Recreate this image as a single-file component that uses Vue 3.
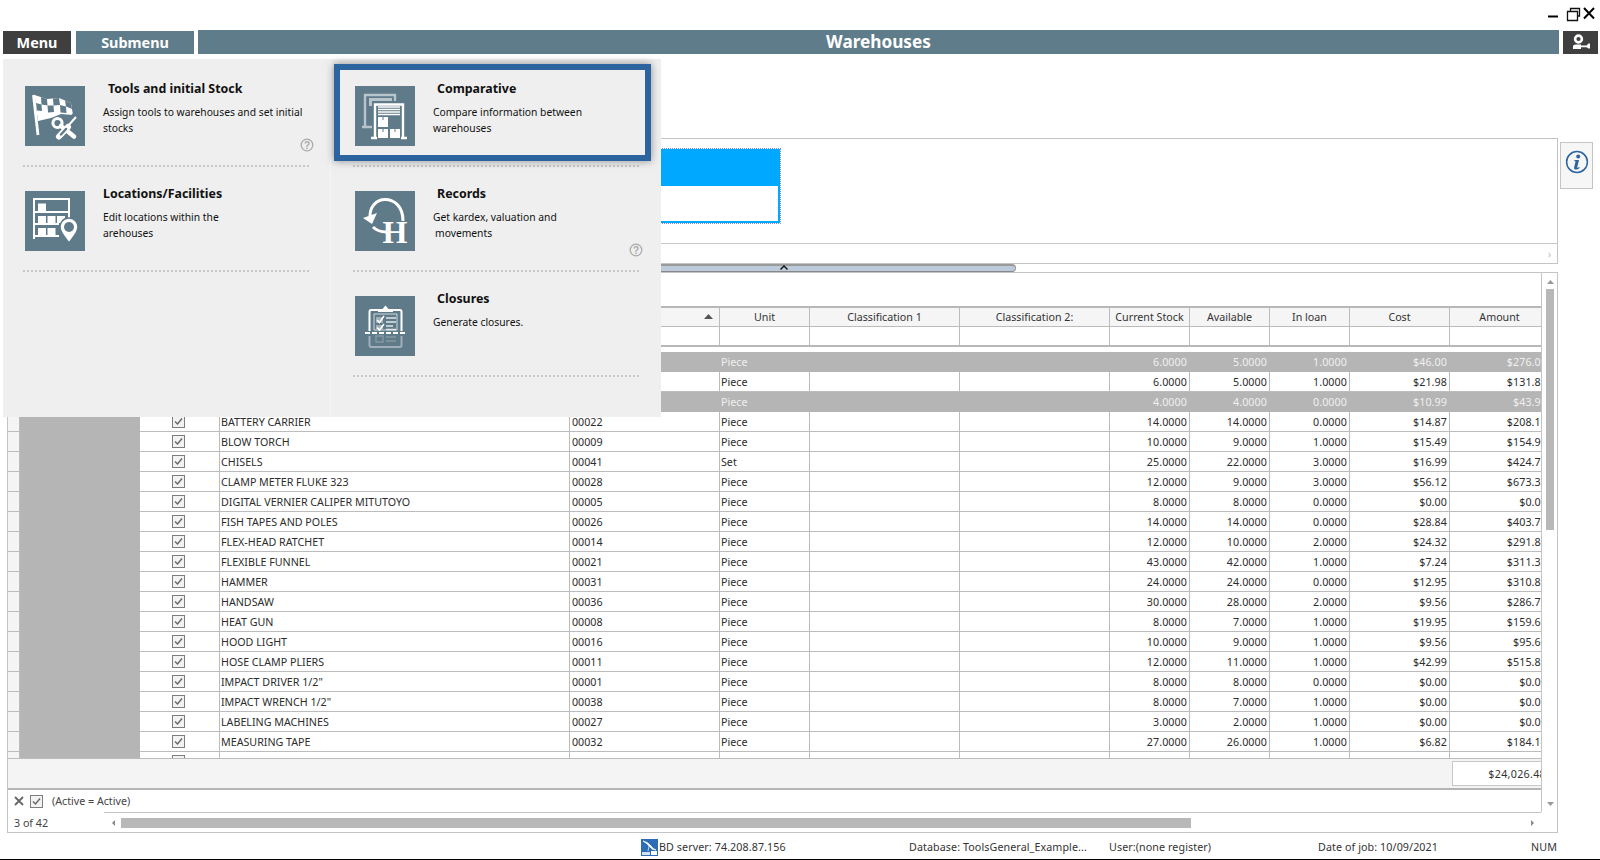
<script setup>
const rows = [
  { g: 1, n: '', c: '', u: 'Piece', v: ['6.0000', '5.0000', '1.0000', '$46.00', '$276.00'] },
  { n: '', c: '', u: 'Piece', v: ['6.0000', '5.0000', '1.0000', '$21.98', '$131.88'] },
  { g: 1, n: '', c: '', u: 'Piece', v: ['4.0000', '4.0000', '0.0000', '$10.99', '$43.96'] },
  { n: 'BATTERY CARRIER', c: '00022', u: 'Piece', v: ['14.0000', '14.0000', '0.0000', '$14.87', '$208.18'] },
  { n: 'BLOW TORCH', c: '00009', u: 'Piece', v: ['10.0000', '9.0000', '1.0000', '$15.49', '$154.90'] },
  { n: 'CHISELS', c: '00041', u: 'Set', v: ['25.0000', '22.0000', '3.0000', '$16.99', '$424.75'] },
  { n: 'CLAMP METER FLUKE 323', c: '00028', u: 'Piece', v: ['12.0000', '9.0000', '3.0000', '$56.12', '$673.38'] },
  { n: 'DIGITAL VERNIER CALIPER MITUTOYO', c: '00005', u: 'Piece', v: ['8.0000', '8.0000', '0.0000', '$0.00', '$0.00'] },
  { n: 'FISH TAPES AND POLES', c: '00026', u: 'Piece', v: ['14.0000', '14.0000', '0.0000', '$28.84', '$403.76'] },
  { n: 'FLEX-HEAD RATCHET', c: '00014', u: 'Piece', v: ['12.0000', '10.0000', '2.0000', '$24.32', '$291.84'] },
  { n: 'FLEXIBLE FUNNEL', c: '00021', u: 'Piece', v: ['43.0000', '42.0000', '1.0000', '$7.24', '$311.32'] },
  { n: 'HAMMER', c: '00031', u: 'Piece', v: ['24.0000', '24.0000', '0.0000', '$12.95', '$310.80'] },
  { n: 'HANDSAW', c: '00036', u: 'Piece', v: ['30.0000', '28.0000', '2.0000', '$9.56', '$286.78'] },
  { n: 'HEAT GUN', c: '00008', u: 'Piece', v: ['8.0000', '7.0000', '1.0000', '$19.95', '$159.60'] },
  { n: 'HOOD LIGHT', c: '00016', u: 'Piece', v: ['10.0000', '9.0000', '1.0000', '$9.56', '$95.60'] },
  { n: 'HOSE CLAMP PLIERS', c: '00011', u: 'Piece', v: ['12.0000', '11.0000', '1.0000', '$42.99', '$515.88'] },
  { n: 'IMPACT DRIVER 1/2"', c: '00001', u: 'Piece', v: ['8.0000', '8.0000', '0.0000', '$0.00', '$0.00'] },
  { n: 'IMPACT WRENCH 1/2"', c: '00038', u: 'Piece', v: ['8.0000', '7.0000', '1.0000', '$0.00', '$0.00'] },
  { n: 'LABELING MACHINES', c: '00027', u: 'Piece', v: ['3.0000', '2.0000', '1.0000', '$0.00', '$0.00'] },
  { n: 'MEASURING TAPE', c: '00032', u: 'Piece', v: ['27.0000', '26.0000', '1.0000', '$6.82', '$184.14'] },
  { n: 'MULTIMETER', c: '00018', u: 'Piece', v: ['9.0000', '8.0000', '1.0000', '$1.25', '$11.25'] }
]
const widths = [12, 120, 80, 350, 150, 90, 150, 150, 80, 80, 80, 100, 100]
const heads = ['Unit', 'Classification 1', 'Classification 2:', 'Current Stock', 'Available', 'In loan', 'Cost', 'Amount']
</script>

<template>
  <div class="page">
    <div class="winbar">
      <svg class="winctl" width="50" height="16" viewBox="0 0 50 16">
        <path d="M2 10.5H12" stroke="#000" stroke-width="2" />
        <path d="M21.5 5.5H31.5V14.5H21.5Z M24.5 5V2.5H33.5V10H32" fill="none" stroke="#111" stroke-width="1.3" />
        <path d="M38 2L48 12.5M48 2L38 12.5" stroke="#000" stroke-width="2" />
      </svg>
    </div>

    <div class="nav">
      <div class="navbtn dark menu"><span>Menu</span></div>
      <div class="navbtn submenu"><span>Submenu</span></div>
      <div class="navtitle"><span>Warehouses</span></div>
      <div class="navbtn dark user">
        <svg width="20" height="16" viewBox="0 0 20 16">
          <circle cx="7.5" cy="5" r="3.4" fill="none" stroke="#fff" stroke-width="2.6" />
          <path d="M2 15V12.5Q2 10.5 5 10.5H10V15Z" fill="#fff" />
          <path d="M10 11.5H15.5L17.5 9.5H19V14.5H17.5L15.5 13.2H10Z" fill="#fff" />
        </svg>
      </div>
    </div>

    <div class="content">
      <div class="main">
        <div class="upper">
          <div class="chartzone">
            <div class="chartbox">
              <div class="chartfill"></div>
            </div>
          </div>
          <div class="uppermeta"><span class="tinyarrow">›</span></div>
        </div>

        <div class="splitter"><svg width="8" height="5" viewBox="0 0 8 5"><path d="M.5 4.5L4 1L7.5 4.5" fill="none" stroke="#111" stroke-width="1.4" /></svg></div>

        <div class="frame">
          <div class="framemain">
            <div class="gridcol">
              <div class="tableclip">
                <div class="groupband"></div>
                <table class="grid">
                  <colgroup>
                    <col v-for="(w, i) in widths" :key="i" :style="{ width: w + 'px' }" />
                  </colgroup>
                  <thead>
                    <tr class="headrow">
                      <th class="rh"></th>
                      <th></th>
                      <th></th>
                      <th></th>
                      <th class="sorted"><svg width="9" height="5" viewBox="0 0 9 5"><path d="M4.5 0L9 5H0Z" fill="#555" /></svg></th>
                      <th v-for="h in heads" :key="h">{{ h }}</th>
                    </tr>
                    <tr class="filterrow">
                      <td class="rh"></td>
                      <td v-for="i in 12" :key="i"></td>
                    </tr>
                    <tr class="gaprow"><td colspan="13"></td></tr>
                  </thead>
                  <tbody>
                    <tr v-for="(r, i) in rows" :key="i" :class="['datarow', { greyrow: r.g }]">
                      <td class="rh"></td>
                      <td class="greycol"></td>
                      <td class="checkcell"><span class="check"><svg width="11" height="11" viewBox="0 0 11 11"><path d="M2 5.5L4.5 8L9 2.5" fill="none" stroke="#666" stroke-width="1.4" /></svg></span></td>
                      <td class="txt">{{ r.n }}</td>
                      <td class="txt code">{{ r.c }}</td>
                      <td class="txt">{{ r.u }}</td>
                      <td></td>
                      <td></td>
                      <td v-for="(x, k) in r.v" :key="k" class="num">{{ x }}</td>
                    </tr>
                  </tbody>
                </table>
              </div>
              <div class="totals"><div class="totalcell">$24,026.48</div></div>
              <div class="filterbar">
                <svg width="10" height="10" viewBox="0 0 10 10"><path d="M1 1L9 9M9 1L1 9" stroke="#666" stroke-width="1.8" /></svg>
                <span class="check"><svg width="11" height="11" viewBox="0 0 11 11"><path d="M2 5.5L4.5 8L9 2.5" fill="none" stroke="#666" stroke-width="1.4" /></svg></span>
                <span class="filtertxt">(Active = Active)</span>
              </div>
            </div>
            <div class="vscroll">
              <svg width="7" height="4" viewBox="0 0 7 4"><path d="M3.5 0L7 4H0Z" fill="#999" /></svg>
              <div class="vthumb"></div>
              <div class="vspace"></div>
              <svg width="7" height="4" viewBox="0 0 7 4"><path d="M3.5 4L7 0H0Z" fill="#999" /></svg>
            </div>
          </div>
          <div class="framebottom">
            <span class="count">3 of 42</span>
            <div class="hscroll">
              <svg width="3" height="6" viewBox="0 0 3 6"><path d="M0 3L3 0V6Z" fill="#888" /></svg>
              <div class="hthumb"></div>
              <div class="hspace"></div>
              <svg width="3" height="6" viewBox="0 0 3 6"><path d="M3 3L0 0V6Z" fill="#888" /></svg>
            </div>
          </div>
        </div>
      </div>

      <div class="infobtn">
        <svg width="24" height="24" viewBox="0 0 24 24">
          <circle cx="12" cy="12" r="10.4" fill="none" stroke="#2c64a0" stroke-width="1.5" />
          <circle cx="13.2" cy="6.5" r="2" fill="#2c64a0" />
          <path d="M9.5 10H14L12.2 17.2Q12 18.4 14.4 17L14.7 18Q12.2 20 10 19.5Q8.6 19 9.2 17L10.6 11.6L9.3 11.1Z" fill="#2c64a0" />
        </svg>
      </div>
    </div>

    <div class="status">
      <span class="st st1">
        <svg width="17" height="17" viewBox="0 0 17 17">
          <rect width="17" height="17" fill="#2d6db5" />
          <path d="M2 2Q7 3 10 7Q12 10 15 11Q11 11 9 8Q7 5 2 2Z M8 7L7 12" fill="#fff" stroke="#fff" stroke-width=".7" />
          <rect x="1" y="13" width="8" height="3" fill="#cfe0f2" />
          <rect x="10" y="12" width="6" height="4" fill="#fff" />
        </svg>
        <span>BD server: 74.208.87.156</span>
      </span>
      <span class="st st2">Database: ToolsGeneral_Example...</span>
      <span class="st st3">User:(none register)</span>
      <span class="st st4">Date of job: 10/09/2021</span>
      <span class="st st5">NUM</span>
    </div>

    <div class="menupanel">
      <div class="menucol">
        <div class="card">
          <div class="icon">
            <svg viewBox="0 0 60 60" width="60" height="60">
              <path d="M8.5 9L13 49" stroke="#fff" stroke-width="2.8" />
              <path d="M9.5 9L22 13L34 12L46 17L48 29L36 28L26 32L13 35Z" fill="#fff" />
              <path d="M16 11L22 13L22.5 19.5L16.5 18.5Z M28 12.5L34 12L35 19L28.5 19.5Z M40 14.5L46 17L47 23L41 20.5Z M11 17L16.5 18.5L17 25L12 24.5Z M22.5 19.5L28.5 19.5L29 26L23 26.5Z M35 19L41 20.5L41.5 27L35.5 26.5Z" fill="#5f7a89" />
              <path d="M51 30L33 50M31 34L50 50" stroke="#5f7a89" stroke-width="8" />
              <path d="M36 40L49 50.5" stroke="#fff" stroke-width="4.5" stroke-linecap="round" />
              <circle cx="32.5" cy="37" r="4.6" fill="none" stroke="#fff" stroke-width="3" />
              <path d="M51 31L42 41" stroke="#fff" stroke-width="2" />
              <path d="M43 41L34 50.5" stroke="#fff" stroke-width="6" stroke-linecap="round" />
              <path d="M41 43L36 48.5" stroke="#5f7a89" stroke-width="2.4" stroke-linecap="round" />
            </svg>
          </div>
          <div class="body">
            <div class="title ind5">Tools and initial Stock</div>
            <div class="desc">Assign tools to warehouses and set initial<br />stocks</div>
          </div>
          <svg class="help helpl" width="14" height="14" viewBox="0 0 14 14">
            <circle cx="7" cy="7" r="5.8" fill="none" stroke="#aaa" stroke-width="1.3" />
            <text x="7" y="10.5" class="helpq">?</text>
          </svg>
        </div>
        <div class="card">
          <div class="icon">
            <svg viewBox="0 0 60 60" width="60" height="60">
              <path d="M9 48V8H44V30M8 21H44M8 33H34M8 45H34" fill="none" stroke="#fff" stroke-width="2" />
              <path d="M13 12.5H21V20H13Z M13 25H21V32H13Z M22.5 25H30.5V32H22.5Z M32 25H40V32H32Z M13 37H21V44H13Z M22.5 37H30.5V44H22.5Z" fill="#fff" />
              <path d="M44 27C38 27 35 32 35 36C35 42 41 47 44 52C47 47 53 42 53 36C53 32 50 27 44 27Z" fill="#fff" stroke="#5f7a89" stroke-width="1.5" />
              <circle cx="44" cy="36" r="5" fill="#5f7a89" />
            </svg>
          </div>
          <div class="body">
            <div class="title">Locations/Facilities</div>
            <div class="desc">Edit locations within the<br />arehouses</div>
          </div>
        </div>
      </div>
      <div class="menucol right">
        <div class="card active">
          <div class="hl"></div>
          <div class="icon">
            <svg viewBox="0 0 60 60" width="60" height="60">
              <path d="M10 41V9H40V16M7 41H17" fill="none" stroke="#b9c5cc" stroke-width="2.4" />
              <path d="M14 12H37V16H18V20H14Z" fill="#b9c5cc" />
              <path d="M20 52V18H48V52" fill="none" stroke="#5f7a89" stroke-width="6" />
              <path d="M20 52V18.5H48V52M16 52H22M46 52H52" fill="none" stroke="#fff" stroke-width="2.4" />
              <path d="M23 21H45M23 23.5H45M23 26H45M23 28.5H45" stroke="#fff" stroke-width="1.3" />
              <path d="M23 31H33V41H23Z M23 43H33V52H23Z M35 43H45V52H35Z" fill="#fff" />
              <path d="M27.5 31H28.5V34H27.5Z M27.5 43H28.5V46H27.5Z M39.5 43H40.5V46H39.5Z" fill="#5f7a89" />
            </svg>
          </div>
          <div class="body">
            <div class="title ind4">Comparative</div>
            <div class="desc">Compare information between<br />warehouses</div>
          </div>
        </div>
        <div class="card">
          <div class="icon">
            <svg viewBox="0 0 60 60" width="60" height="60">
              <path d="M15 25C15 15 22 8.5 30 8.5C39 8.5 48 15 48 30" fill="none" stroke="#fff" stroke-width="3" />
              <path d="M8 27L22 22L17 33Z" fill="#fff" />
              <path d="M18 36Q23 41 31 41" fill="none" stroke="#fff" stroke-width="3" />
              <text x="27.5" y="52" class="serifh">H</text>
            </svg>
          </div>
          <div class="body">
            <div class="title ind4">Records</div>
            <div class="desc">Get kardex, valuation and<br /><span class="nudge">movements</span></div>
          </div>
          <svg class="help helpr" width="14" height="14" viewBox="0 0 14 14">
            <circle cx="7" cy="7" r="5.8" fill="none" stroke="#aaa" stroke-width="1.3" />
            <text x="7" y="10.5" class="helpq">?</text>
          </svg>
        </div>
        <div class="card">
          <div class="icon">
            <svg viewBox="0 0 60 60" width="60" height="60">
              <path d="M23 14H16Q14.5 14 14.5 16V35M46.5 35V16Q46.5 14 45 14H38" fill="none" stroke="#fff" stroke-width="2" />
              <path d="M23 16V13H27.5L30.5 9.5L33.5 13H38V16Z" fill="#fff" />
              <path d="M19 18H42V34H19Z" fill="none" stroke="#fff" stroke-width="1" opacity=".7" />
              <rect x="21" y="21" width="7" height="6" fill="#9fb0ba" />
              <rect x="21" y="29" width="7" height="5" fill="#9fb0ba" />
              <path d="M22 24L24.5 26.5L29 20M22 31.5L24.5 34L29 28" fill="none" stroke="#fff" stroke-width="1.5" />
              <path d="M31 22H41M31 26H41M31 30H38M31 33.5H41" stroke="#dfe5e9" stroke-width="1.6" />
              <path d="M10 37H50" stroke="#fff" stroke-width="2" stroke-dasharray="5 2" />
              <path d="M14.5 40V49Q14.5 51 16 51H45Q46.5 51 46.5 49V40" fill="none" stroke="#9fb0ba" stroke-width="2" />
              <path d="M21 40H28V46H21Z M31 41H41M31 45H41" fill="none" stroke="#86999f" stroke-width="1.4" />
            </svg>
          </div>
          <div class="body">
            <div class="title ind4">Closures</div>
            <div class="desc">Generate closures.</div>
          </div>
        </div>
      </div>
    </div>
  </div>
</template>

<style>
html, body { margin: 0; padding: 0; background: #fff; }
</style>

<style scoped>
.page {
  position: relative;
  width: 1600px;
  height: 860px;
  overflow: hidden;
  background: #fff;
  border-bottom: 1px solid #000;
  box-sizing: border-box;
  display: flex;
  flex-direction: column;
  font-family: "Noto Sans", "DejaVu Sans", sans-serif;
  font-size: 10.7px;
  color: #333;
}
.winbar { height: 30px; display: flex; justify-content: flex-end; padding: 6px 4px 0 0; box-sizing: border-box; }
.winctl { display: block; }
.nav { height: 24px; display: flex; padding: 0 2px 0 3px; color: #fff; font-weight: 700; font-size: 14.4px; }
.navbtn, .navtitle { display: flex; align-items: center; justify-content: center; background: #5f7c8a; padding-bottom: 1px; box-sizing: border-box; }
.navbtn { margin-top: 1px; }
.dark { background: #3f3f3f; }
.menu { width: 68px; margin-right: 5px; }
.submenu { width: 118px; margin-right: 4px; }
.navtitle { flex: 1; font-size: 17.2px; margin-right: 4px; padding-bottom: 2px; }
.user { width: 35px; }

.content { flex: none; display: flex; padding: 84px 0 0 7px; height: 779px; box-sizing: border-box; }
.main { width: 1551px; display: flex; flex-direction: column; }
.infobtn {
  width: 33px; height: 47px; margin: 4px 0 0 2px; box-sizing: border-box;
  border: 1px solid #c4c4c4; background: #f6f6f6;
  display: flex; align-items: center; justify-content: center; padding: 0 0 7px 1px;
}
.upper {
  height: 126px; box-sizing: border-box; border: 1px solid #c4c4c4;
  display: flex; flex-direction: column;
}
.chartzone { height: 105px; padding: 10px 0 0 300px; box-sizing: border-box; border-bottom: 1px solid #c8c8c8; }
.chartbox { width: 472px; height: 74px; box-sizing: border-box; background: #fff; border: 2px solid #00a8ff; outline: 1px dotted #7a8fd8; }
.chartfill { height: 35px; background: #00a8ff; }
.uppermeta { flex: 1; display: flex; justify-content: flex-end; align-items: center; padding-right: 6px; color: #bbb; font-size: 10px; }
.splitter {
  height: 8px; width: 1009px; box-sizing: border-box; margin-top: 0;
  background: #bccbdc; border-top: 2px solid #9a9a9a; border-bottom: 1px solid #888;
  border-right: 1px solid #999; border-radius: 0 4px 4px 0;
  display: flex; justify-content: flex-end; align-items: flex-start; padding-right: 227px;
}
.splitter svg { margin-top: -1px; }

.frame { height: 561px; box-sizing: border-box; border: 1px solid #c4c4c4; border-top-width: 1px; display: flex; flex-direction: column; }
.framemain { height: 540px; display: flex; }
.gridcol { width: 1533px; display: flex; flex-direction: column; border-right: 1px solid #c4c4c4; box-sizing: content-box; }
.tableclip { height: 485px; overflow: hidden; flex: none; }
.groupband { height: 33px; }
.grid { border-collapse: separate; border-spacing: 0; table-layout: fixed; width: 1542px; }
.grid td, .grid th { padding: 0; box-sizing: border-box; border-right: 1px solid #bcbcbc; border-bottom: 1px solid #bcbcbc; overflow: hidden; white-space: nowrap; }
.headrow th { height: 21px; background: #f5f5f5; font-weight: 400; font-size: 10.7px; color: #333; border-top: 2px solid #b8b8b8; text-align: center; line-height: 16px; }
.headrow .sorted { text-align: right; padding-right: 6px; }
.headrow .sorted svg { display: inline-block; vertical-align: 2px; }
.filterrow td { height: 19px; background: #fff; }
.gaprow td { height: 6px; border-top: 1px solid #b8b8b8; border-right: none; border-bottom: none; }
.filterrow td { border-bottom: 1px solid #b8b8b8; }
.datarow td { height: 20px; line-height: 18px; color: #2c2c2c; }
.rh { background: #f4f4f4; }
.greycol { background: #b5b5b5; border-right-color: #b5b5b5 !important; border-bottom-color: #b5b5b5 !important; }
.txt { padding-left: 1px !important; }
.code { padding-left: 2px !important; }
.num { text-align: right; padding-right: 2px !important; letter-spacing: .1px; }
.greyrow td { background: #b5b5b5; color: #f0f0f0; border-color: #b5b5b5; }
.checkcell { text-align: center; padding-right: 2px !important; }
.check { display: inline-flex; width: 13px; height: 13px; box-sizing: border-box; border: 1px solid #7d7d7d; background: #f2f2f2; vertical-align: middle; margin-top: -2px; }
.totals { height: 32px; flex: none; box-sizing: border-box; border-top: 1px solid #bcbcbc; border-bottom: 2px solid #b5b5b5; background: #f4f4f4; overflow: hidden; display: flex; justify-content: flex-end; padding-top: 2px; }
.totalcell { width: 97px; flex: none; margin-right: -8px; height: 25px; box-sizing: border-box; border: 1px solid #c8c8c8; background: #fff; text-align: right; padding-right: 2px; line-height: 25px; letter-spacing: .3px; }
.filterbar { flex: 1; display: flex; align-items: center; padding-left: 6px; }
.filterbar .check { margin: 0 0 0 6px; }
.filtertxt { margin-left: 9px; color: #444; }
.vscroll { width: 16px; display: flex; flex-direction: column; align-items: center; padding-top: 7px; box-sizing: border-box; flex: none; }
.vthumb { width: 8px; height: 241px; margin-top: 5px; background: #b8b8b8; }
.vspace { flex: 1; }
.vscroll > svg:last-child { margin-bottom: 6px; }
.framebottom { flex: 1; display: flex; }
.count { width: 96px; padding: 0 0 0 6px; box-sizing: border-box; line-height: 18px; margin-top: 2px; color: #444; }
.hscroll { width: 1437px; border-top: 1px solid #c4c4c4; box-sizing: border-box; display: flex; align-items: center; padding: 0 7px 0 8px; }
.hthumb { width: 1070px; height: 10px; background: #b8b8b8; margin-left: 6px; margin-top: 0; }
.hspace { flex: 1; }

.status { height: 26px; display: flex; align-items: center; padding: 2px 0 0 641px; box-sizing: border-box; flex: none; font-size: 10.7px; color: #333; letter-spacing: .1px; }
.st { white-space: nowrap; display: flex; align-items: center; }
.st1 { width: 268px; gap: 1px; }
.st2 { width: 200px; }
.st3 { width: 209px; }
.st4 { width: 213px; }

.menupanel {
  position: absolute; left: 3px; top: 59px; width: 658px; height: 358px;
  display: flex; background: #efefef; box-sizing: border-box;
  color: #111;
}
.menucol { width: 328px; padding: 3px 21px 0 20px; box-sizing: border-box; border-right: 1px solid #f6f6f6; }
.menucol.right { width: 330px; padding: 3px 22px 0 22px; border-right: none; }
.card { position: relative; height: 105px; display: flex; padding-left: 2px; box-sizing: border-box; border-bottom: 2px dotted #c8c8c8; }
.hl { position: absolute; left: -19px; right: -12px; top: 2px; height: 97px; box-sizing: border-box; border: 6px solid #2c64a0; background: #efefef; box-shadow: 0 0 8px rgba(60, 60, 60, .55); }
.icon { position: relative; width: 60px; height: 60px; margin-top: 24px; background: #5f7a89; flex: none; }
.icon svg { display: block; }
.body { position: relative; margin-left: 18px; padding-top: 19px; }
.title { font-weight: 700; font-size: 12.4px; line-height: 16px; color: #111; }
.ind5 { margin-left: 5px; }
.ind4 { margin-left: 4px; }
.desc { margin-top: 7px; font-size: 10.3px; line-height: 16px; white-space: nowrap; }
.nudge { margin-left: 2px; }
.help { position: absolute; top: 76px; }
.helpl { right: -5px; }
.helpr { right: -4px; }
.helpq { font-size: 10px; font-weight: 700; fill: #aaa; text-anchor: middle; font-family: "Liberation Sans", sans-serif; }
.serifh { font-family: "Liberation Serif", serif; font-weight: 700; font-size: 32px; fill: #fff; }
</style>
